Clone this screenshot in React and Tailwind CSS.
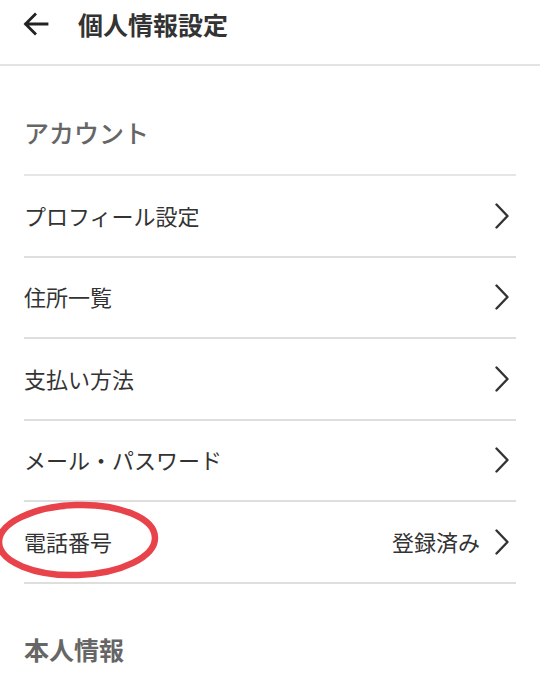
import React from 'react';

const font = { fontFamily: '"Noto Sans CJK JP", "Noto Sans", sans-serif' };

const Chevron = () => (
  <svg width="16" height="26" viewBox="0 0 16 26" fill="none" className="shrink-0">
    <path d="M2.5 1.5 L13.5 13 L2.5 24.5" stroke="#333" strokeWidth="2.4" strokeLinecap="round" strokeLinejoin="round" />
  </svg>
);

const Row = ({ label, value }) => (
  <div className="flex items-center justify-between h-[81.5px] border-b-2 border-[#dedede]">
    <span className="text-[22px] leading-[30px] text-[#333] -mt-[2px]">{label}</span>
    <div className="flex items-center gap-[14px] pr-[6px]">
      {value && <span className="text-[22px] leading-[30px] text-[#333] -mt-[2px]">{value}</span>}
      <Chevron />
    </div>
  </div>
);

export default function App() {
  const rows = [
    { label: 'プロフィール設定' },
    { label: '住所一覧' },
    { label: '支払い方法' },
    { label: 'メール・パスワード' },
    { label: '電話番号', value: '登録済み' },
  ];

  return (
    <div className="relative w-[540px] h-[685px] bg-white overflow-hidden" style={font}>
      <header className="flex items-center h-[66px] border-b-2 border-[#e3e3e3] pl-[23px] pb-[16px]">
        <svg width="26" height="24" viewBox="0 0 26 24" fill="none">
          <path d="M24 12 H3 M12 2.5 L2.5 12 L12 21.5" stroke="#222" strokeWidth="2.8" strokeLinecap="square" />
        </svg>
        <h1 className="ml-[29px] text-[25px] leading-[32px] font-bold text-[#333]">個人情報設定</h1>
      </header>

      <div className="px-[24px]">
        <div className="pt-[50px] pb-[26px] text-[25px] leading-[32px] font-medium text-[#666] border-b-2 border-[#e6e6e6]">
          アカウント
        </div>
        {rows.map((r) => (
          <Row key={r.label} label={r.label} value={r.value} />
        ))}
        <div className="pt-[49px] text-[25px] leading-[32px] font-bold text-[#666]">本人情報</div>
      </div>

      <svg className="absolute left-0 top-[499px] pointer-events-none" width="170" height="86" viewBox="0 0 170 86">
        <ellipse cx="77" cy="41" rx="78" ry="35" fill="none" stroke="#e8434a" strokeWidth="6.5" transform="rotate(-2 77 41)" />
      </svg>
    </div>
  );
}
